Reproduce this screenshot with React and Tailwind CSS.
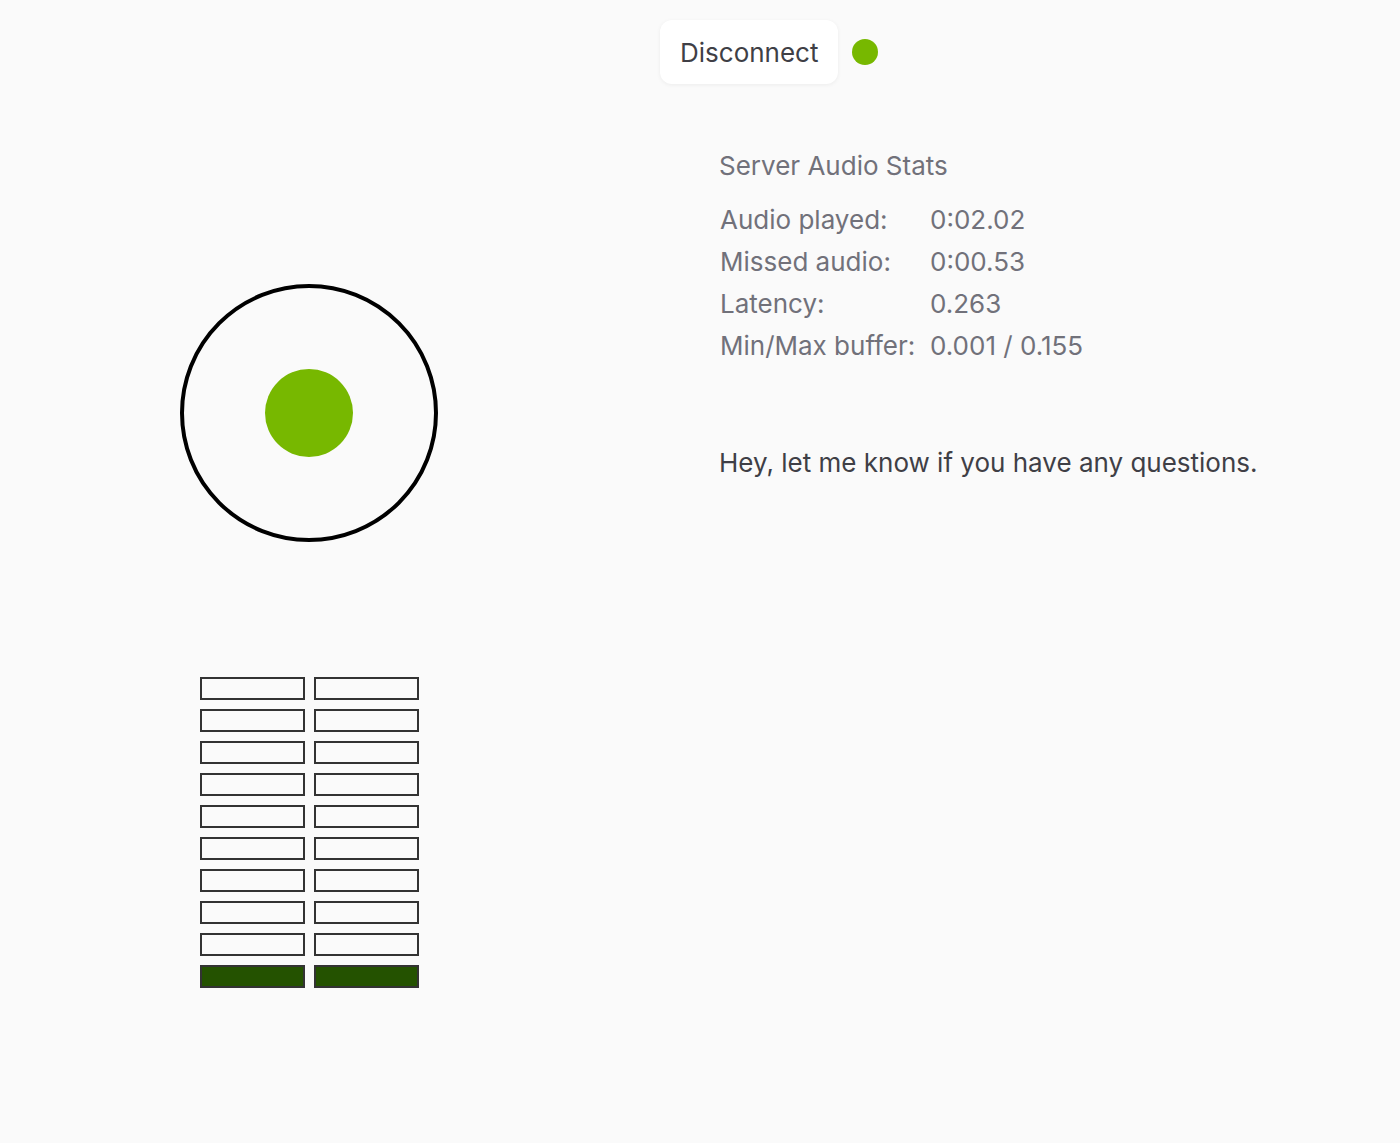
import React from 'react';

const stats = [
    ['Audio played:', '0:02.02'],
    ['Missed audio:', '0:00.53'],
    ['Latency:', '0.263'],
    ['Min/Max buffer:', '0.001 / 0.155'],
];

function Meter() {
    const rows = Array.from({ length: 10 }, (_, i) => i);
    return (
        <div className="flex flex-col gap-[9px]">
            {rows.map((i) => {
                const on = i === 9;
                return (
                    <div key={i} className="flex gap-[9px]">
                        <div className={`w-[105px] h-[23px] border-2 border-[#333] ${on ? 'bg-[#245200]' : 'bg-transparent'}`} />
                        <div className={`w-[105px] h-[23px] border-2 border-[#333] ${on ? 'bg-[#245200]' : 'bg-transparent'}`} />
                    </div>
                );
            })}
        </div>
    );
}

export default function App() {
    return (
        <div className="min-h-screen bg-[#fafafa] font-['Inter',sans-serif] relative">
            <div className="flex items-center gap-[14px] pl-[660px] pt-5">
                <button className="h-[64px] px-5 rounded-xl bg-white shadow-[0_1px_4px_rgba(0,0,0,0.06)] text-[26px] text-[#3f3f46]">
                    Disconnect
                </button>
                <div className="w-[26px] h-[26px] rounded-full bg-[#77b800]" />
            </div>

            <div className="flex">
                <div className="w-[719px] flex flex-col pl-[180px]">
                    <div className="mt-[200px] w-[258px] h-[258px] rounded-full border-4 border-black flex items-center justify-center">
                        <div className="w-[88px] h-[88px] rounded-full bg-[#77b800]" />
                    </div>
                    <div className="mt-[135px] ml-[20px]">
                        <Meter />
                    </div>
                </div>

                <div className="flex flex-col pt-[66px]">
                    <h2 className="text-[26px] text-[#71717a] leading-[32px]">Server Audio Stats</h2>
                    <div className="mt-[17px] ml-[1px] grid grid-cols-[210px_auto] text-[26px] leading-[42px] text-[#71717a]">
                        {stats.map(([k, v]) => (
                            <React.Fragment key={k}>
                                <span>{k}</span>
                                <span>{v}</span>
                            </React.Fragment>
                        ))}
                    </div>
                    <p className="mt-[80px] text-[26px] text-[#3f3f46] leading-[32px]">
                        Hey, let me know if you have any questions.
                    </p>
                </div>
            </div>
        </div>
    );
}
